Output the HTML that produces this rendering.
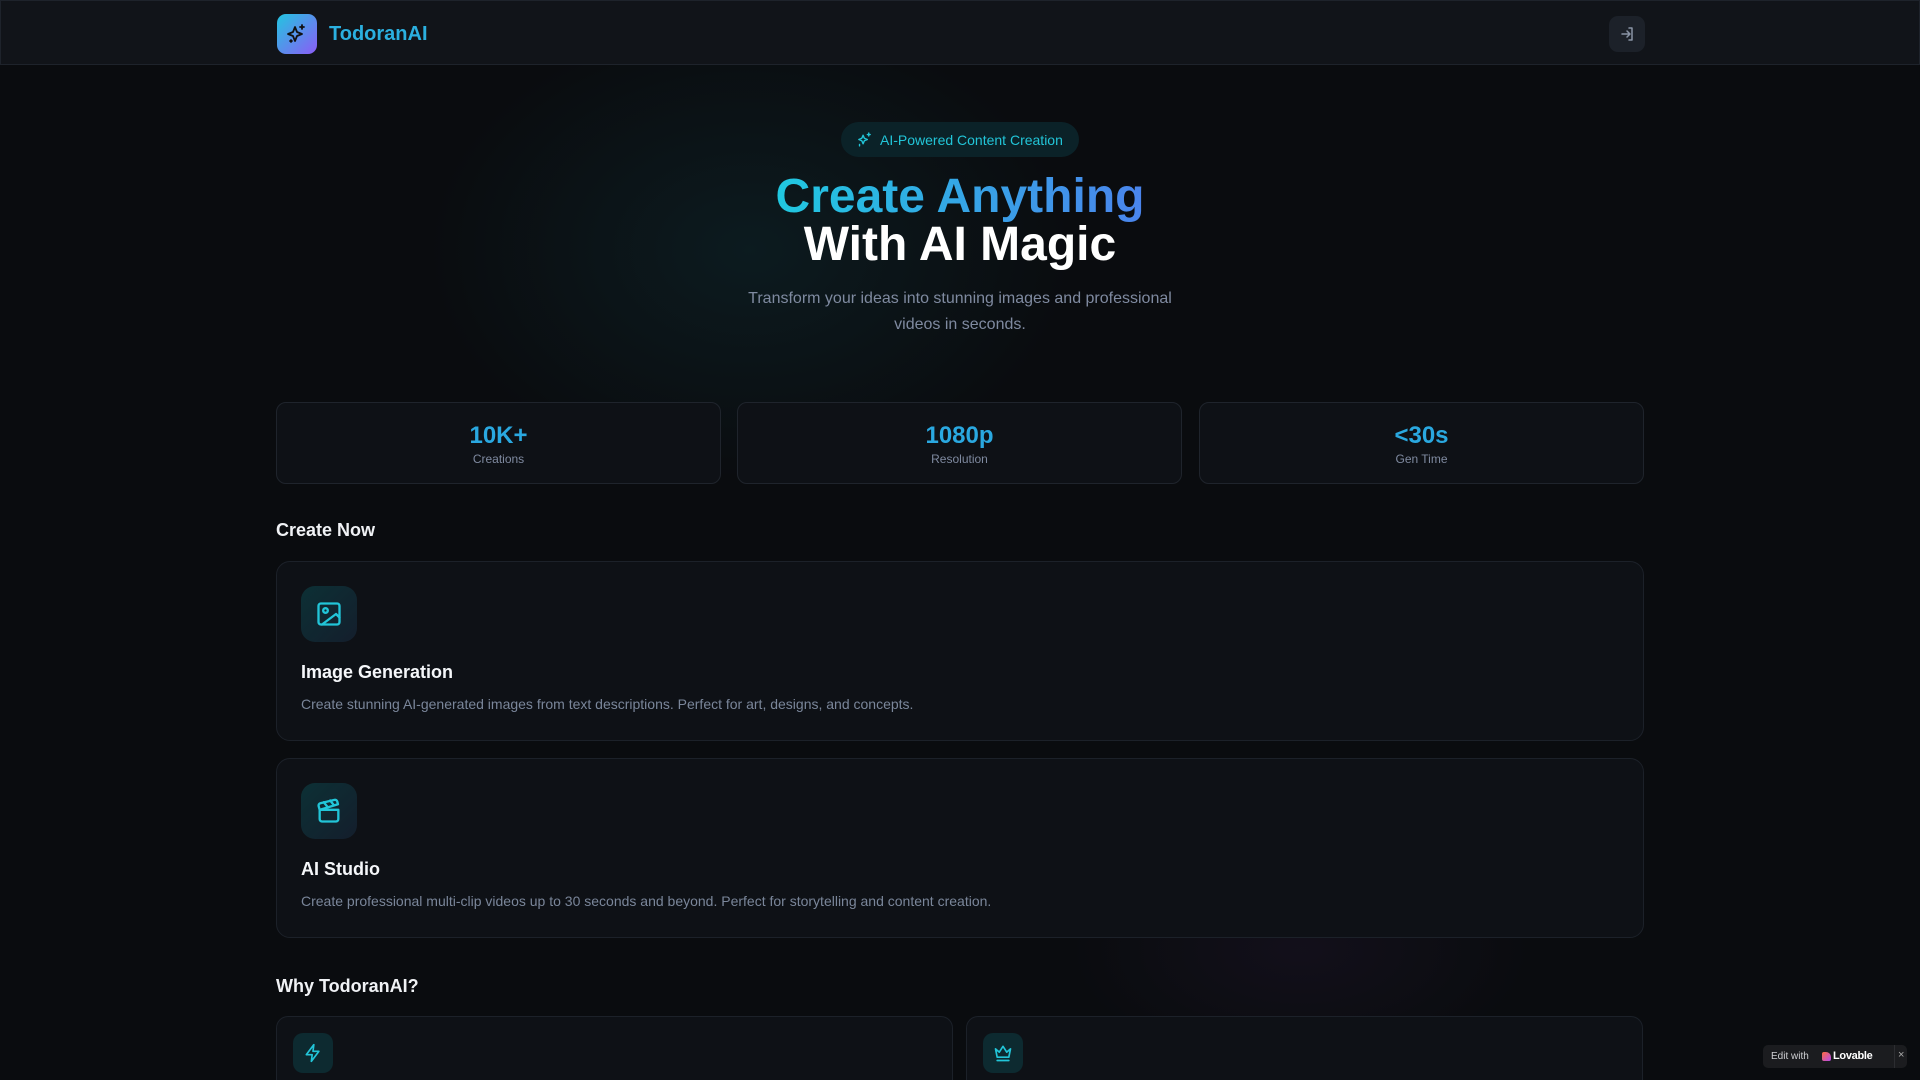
<!DOCTYPE html>
<html style="overflow:hidden;width:1920px;height:1080px"><head><meta charset="utf-8"><style>
*{box-sizing:border-box;margin:0;padding:0}
body{width:1920px;height:1080px;overflow:hidden;background:#0a0c0f;font-family:"Liberation Sans",sans-serif;color:#f5f7fa;position:relative}
.glow1{position:absolute;left:400px;top:0;width:700px;height:500px;background:radial-gradient(ellipse at center,rgba(20,80,90,0.22),rgba(0,0,0,0) 65%)}
.glow2{position:absolute;left:1050px;top:820px;width:500px;height:260px;background:radial-gradient(ellipse at center,rgba(80,40,110,0.12),rgba(0,0,0,0) 65%)}
header{position:absolute;left:0;top:0;width:1920px;height:65px;background:#111419;border:1px solid #1e232b}
.logo{position:absolute;left:276px;top:13px;width:40px;height:40px;border-radius:9px;background:linear-gradient(135deg,#22c5e0,#8b5cf6)}
.brand{position:absolute;left:328px;top:22px;font-size:20px;font-weight:bold;color:#2bb0e0}
.login{position:absolute;left:1608px;top:15px;width:36px;height:36px;border-radius:9px;background:#1c2129}
.badge{position:absolute;left:841px;top:122px;width:238px;height:35px;border-radius:18px;background:#0b2228;color:#22c5d8;font-size:14px}
.badge span{position:absolute;left:39px;top:10px}
h1{position:absolute;left:0;width:1920px;text-align:center;font-size:48px;font-weight:bold;line-height:48px}
.l1{top:173px}.l1 span{background:linear-gradient(90deg,#20c8e0,#4a84ec);-webkit-background-clip:text;color:transparent}
.l2{top:221px;color:#fff}
.sub{position:absolute;left:0;top:286px;width:1920px;text-align:center;font-size:16px;line-height:26px;color:#7f8aa0}
.stat{position:absolute;top:402px;width:445px;height:82px;border:1px solid #1f242c;border-radius:10px;background:#0e1116;text-align:center}
.stat b{display:block;margin-top:19px;font-size:24px;color:#2aa8e0}
.stat i{display:block;font-style:normal;font-size:12px;color:#7f8aa0;margin-top:2px}
h2{position:absolute;left:276px;font-size:18px;font-weight:bold;color:#f0f2f5}
.card{position:absolute;left:276px;width:1368px;height:180px;border:1px solid #1c2129;border-radius:14px;background:#0e1116}
.ic{position:absolute;left:24px;top:24px;width:56px;height:56px;border-radius:14px;background:linear-gradient(135deg,#0c3035,#141e2c)}
.ic svg{position:absolute;left:14px;top:14px}
.card h3{position:absolute;left:24px;top:100px;font-size:18px;color:#f5f7fa}
.card p{position:absolute;left:24px;top:134px;font-size:14px;color:#7a869a}
.wcard{position:absolute;top:1016px;width:677px;height:64px;border:1px solid #1c2129;border-bottom:none;border-radius:12px 12px 0 0;background:#0e1116}
.wic{position:absolute;left:16px;top:16px;width:40px;height:40px;border-radius:10px;background:#0d2a30}
.wic svg{position:absolute;left:10px;top:10px}
.lov{position:absolute;left:1763px;top:1045px;width:144px;height:23px;border-radius:5px;background:#1b1c1f;font-size:11px;color:#cfd0d3}
</style></head><body>
<div class="glow1"></div><div class="glow2"></div>
<header>
<div class="logo"><svg width="40" height="40" viewBox="0 0 40 40" fill="none" stroke="#111" stroke-width="1.8" stroke-linejoin="round" stroke-linecap="round"><path d="M18 13l2 5 5 2-5 2-2 5-2-5-5-2 5-2z"/><path d="M25 11v4M23 13h4M14 26v2M13 27h2"/></svg></div>
<div class="brand">TodoranAI</div>
<div class="login"><svg width="36" height="36" viewBox="0 0 36 36" fill="none" stroke="#8a94a6" stroke-width="1.5" stroke-linecap="round" stroke-linejoin="round"><path d="M13 18h8M18 15l3 3-3 3M20 12h3v12h-3"/></svg></div>
</header>
<div class="badge"><svg style="position:absolute;left:15px;top:9px" width="17" height="17" viewBox="0 0 24 24" fill="none" stroke="#22c5d8" stroke-width="2" stroke-linejoin="round" stroke-linecap="round"><path d="M10 6l1.8 4.2L16 12l-4.2 1.8L10 18l-1.8-4.2L4 12l4.2-1.8z"/><path d="M18 3v4M16 5h4M5 19v2"/></svg><span>AI-Powered Content Creation</span></div>
<h1 class="l1"><span>Create Anything</span></h1>
<h1 class="l2">With AI Magic</h1>
<div class="sub">Transform your ideas into stunning images and professional<br>videos in seconds.</div>
<div class="stat" style="left:276px"><b>10K+</b><i>Creations</i></div>
<div class="stat" style="left:737px"><b>1080p</b><i>Resolution</i></div>
<div class="stat" style="left:1199px"><b>&lt;30s</b><i>Gen Time</i></div>
<h2 style="top:520px">Create Now</h2>
<div class="card" style="top:561px"><div class="ic"><svg width="28" height="28" viewBox="0 0 24 24" fill="none" stroke="#22c5d8" stroke-width="2" stroke-linecap="round" stroke-linejoin="round"><rect x="3" y="3" width="18" height="18" rx="2"/><circle cx="9" cy="9" r="2"/><path d="M21 15l-3-3L6 21"/></svg></div><h3>Image Generation</h3><p>Create stunning AI-generated images from text descriptions. Perfect for art, designs, and concepts.</p></div>
<div class="card" style="top:758px"><div class="ic"><svg width="28" height="28" viewBox="0 0 24 24" fill="none" stroke="#22c5d8" stroke-width="2" stroke-linecap="round" stroke-linejoin="round"><path d="M4 11v8a2 2 0 002 2h12a2 2 0 002-2v-8H4z"/><path d="M4 11l-.9-3.2a2 2 0 011.4-2.4L16.7 2.5a2 2 0 012.4 1.4l.6 2.3z"/><path d="M7.5 4.5l3 3.7M13 3l3.1 3.9"/></svg></div><h3>AI Studio</h3><p>Create professional multi-clip videos up to 30 seconds and beyond. Perfect for storytelling and content creation.</p></div>
<h2 style="top:976px">Why TodoranAI?</h2>
<div class="wcard" style="left:276px"><div class="wic"><svg width="20" height="20" viewBox="0 0 24 24" fill="none" stroke="#22c5d8" stroke-width="2" stroke-linejoin="round"><path d="M13 2L4 14h7l-1 8 9-12h-7z"/></svg></div></div>
<div class="wcard" style="left:966px"><div class="wic"><svg width="20" height="20" viewBox="0 0 24 24" fill="none" stroke="#22c5d8" stroke-width="2" stroke-linejoin="round" stroke-linecap="round"><path d="M3 7l4.5 4L12 4l4.5 7L21 7l-2 10H5z"/><path d="M5 21h14"/></svg></div></div>
<div class="lov"><span style="position:absolute;left:8px;top:6px;font-size:10px">Edit with</span><span style="position:absolute;left:59px;top:7px;width:9px;height:9px;border-radius:2px 5px 2px 2px;background:linear-gradient(135deg,#ff6a3d,#b44cf0)"></span><span style="position:absolute;left:70px;top:5px;font-weight:bold;color:#fff;font-size:11px;letter-spacing:-0.3px">Lovable</span><span style="position:absolute;left:131px;top:0;height:23px;border-left:1px solid #2c2d31"></span><span style="position:absolute;left:135px;top:4px;color:#aaa">×</span></div>
</body></html>
